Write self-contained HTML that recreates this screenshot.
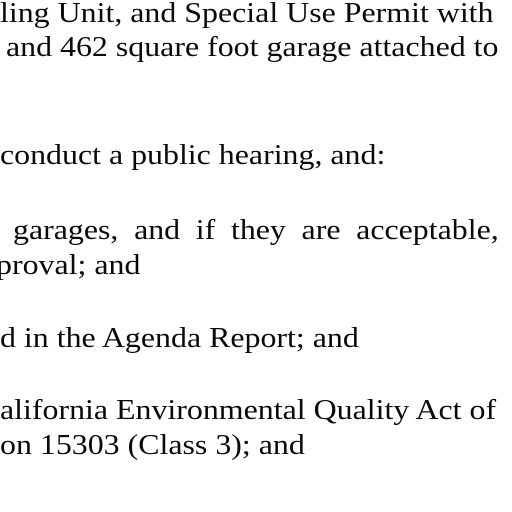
<!DOCTYPE html>
<html><head><meta charset="utf-8"><style>
html,body{margin:0;padding:0;background:#fff;width:512px;height:512px;overflow:hidden;position:relative}
.l{position:absolute;white-space:nowrap;font-family:"Liberation Serif",serif;font-size:29px;color:#0a0a0a;line-height:1;transform:scaleX(1.1);transform-origin:0 0}
</style></head><body>
<div class="l" style="left:0;top:-1px">ling Unit, and Special Use Permit with</div>
<div class="l" style="left:6px;top:33px">and 462 square foot garage attached to</div>
<div class="l" style="left:0;top:141px">conduct a public hearing, and:</div>
<div class="l" style="left:13px;top:216px;word-spacing:7px">garages, and if they are acceptable,</div>
<div class="l" style="left:-4px;top:251px">proval; and</div>
<div class="l" style="left:0;top:324px">d in the Agenda Report; and</div>
<div class="l" style="left:0;top:396px">alifornia Environmental Quality Act of</div>
<div class="l" style="left:0;top:431px">on 15303 (Class 3); and</div>
</body></html>
